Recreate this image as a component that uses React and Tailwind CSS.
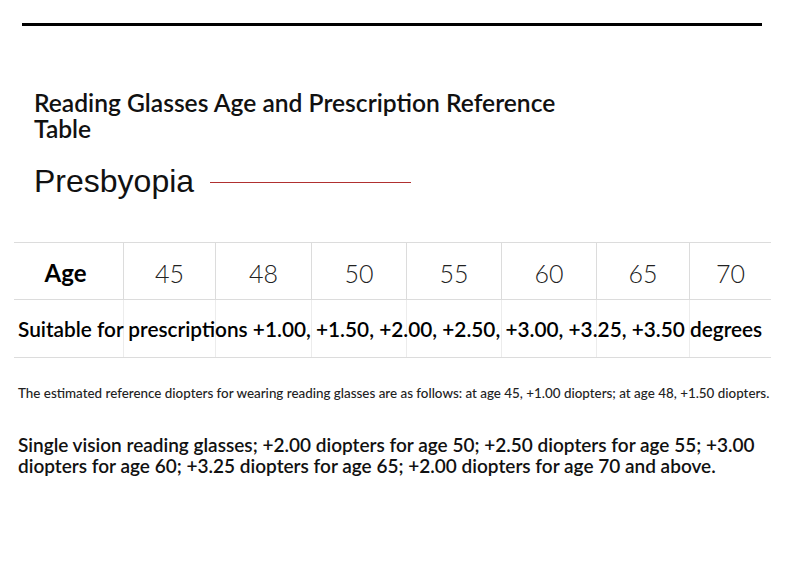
const ages = ['45', '48', '50', '55', '60', '65', '70'];
const colWidths = ['w-[109px]', 'w-[92px]', 'w-[96px]', 'w-[95px]', 'w-[95px]', 'w-[95px]', 'w-[93px]', 'w-[82px]'];

export default function App() {
  return (
    <div className="w-[790px] h-[571px] bg-white overflow-hidden font-['Lato',sans-serif] text-black">
      <div className="pt-[23px] px-[22px]">
        <div className="w-[740px] h-[3px] bg-black" />
      </div>

      <h1 className="mt-[64px] ml-[34px] w-[560px] text-[24.6px] leading-[26px] font-semibold text-[#111]">
        Reading Glasses Age and Prescription Reference Table
      </h1>

      <div className="mt-[21px] ml-[34px] flex items-center">
        <span className="font-['Liberation_Sans',sans-serif] text-[32px] leading-[36px] text-[#111]">Presbyopia</span>
        <div className="ml-[16px] mt-[3px] w-[201px] h-px bg-[#b03030]" />
      </div>

      <div className="mt-[43px] ml-[14px] w-[757px] border-t border-[#dcdcdc]">
        <div className="flex h-[57px] border-b border-[#dcdcdc]">
          <div className={`${colWidths[0]} flex items-center justify-center pt-[4px] pr-[6px] text-[24px] font-bold`}>Age</div>
          {ages.map((a, i) => (
            <div
              key={a}
              className={`${colWidths[i + 1]} flex items-center justify-center pt-[5px] border-l border-[#dcdcdc] text-[25px] font-light text-[#222]`}
            >
              {a}
            </div>
          ))}
        </div>
        <div className="relative flex h-[58px] border-b border-[#dcdcdc]">
          {colWidths.map((w, i) => (
            <div key={i} className={`${w} ${i > 0 ? 'border-l border-[#ececec]' : ''}`} />
          ))}
          <div className="absolute inset-0 flex items-center pl-[4px] text-[20.8px] font-semibold whitespace-nowrap">
            Suitable for prescriptions +1.00, +1.50, +2.00, +2.50, +3.00, +3.25, +3.50 degrees
          </div>
        </div>
      </div>

      <p className="mt-[27px] ml-[18px] text-[13.4px] leading-[16px] font-medium text-[#222] whitespace-nowrap">
        The estimated reference diopters for wearing reading glasses are as follows: at age 45, +1.00 diopters; at age 48, +1.50 diopters.
      </p>

      <p className="mt-[33px] ml-[18px] w-[760px] text-[19px] leading-[21px] font-semibold text-[#111]">
        Single vision reading glasses; +2.00 diopters for age 50; +2.50 diopters for age 55; +3.00 diopters for age 60; +3.25 diopters for age 65; +2.00 diopters for age 70 and above.
      </p>
    </div>
  );
}
